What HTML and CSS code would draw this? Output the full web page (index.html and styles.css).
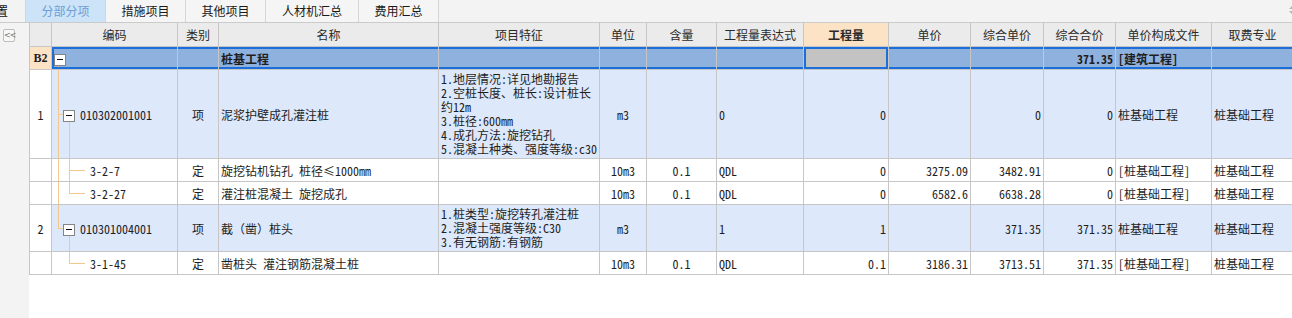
FILE: index.html
```html
<!DOCTYPE html>
<html lang="zh-CN">
<head>
  <meta charset="UTF-8">
  <title>分部分项</title>
  <link rel="stylesheet" href="styles.css">
</head>
<body>
  <div class="app">
    <!-- top tab strip -->
    <div class="tabbar">
      <div class="tab-cut"><span>置</span></div>
      <div class="tab active">分部分项</div>
      <div class="tab">措施项目</div>
      <div class="tab">其他项目</div>
      <div class="tab wide">人材机汇总</div>
      <div class="tab last">费用汇总</div>
      <div class="tab-fill"></div>
      <svg class="tab-scroll" width="8" height="10" viewBox="0 0 8 10">
        <path d="M4 0 L8 4 L0 4 Z M4 10 L8 6 L0 6 Z" fill="#b5b5b5"/>
      </svg>
    </div>

    <div class="workspace">
      <aside class="side">
        <button class="collapse">&lt;&lt;</button>
      </aside>

      <main class="grid-wrap">
        <table class="grid">
          <colgroup>
            <col style="width:22px">
            <col style="width:126px">
            <col style="width:41px">
            <col style="width:220px">
            <col style="width:161px">
            <col style="width:47px">
            <col style="width:70px">
            <col style="width:87px">
            <col style="width:85px">
            <col style="width:82px">
            <col style="width:73px">
            <col style="width:72px">
            <col style="width:96px">
            <col style="width:82px">
          </colgroup>
          <thead>
            <tr class="head">
              <th></th>
              <th>编码</th>
              <th>类别</th>
              <th>名称</th>
              <th>项目特征</th>
              <th>单位</th>
              <th>含量</th>
              <th>工程量表达式</th>
              <th class="hot">工程量</th>
              <th>单价</th>
              <th>综合单价</th>
              <th>综合合价</th>
              <th>单价构成文件</th>
              <th>取费专业</th>
            </tr>
          </thead>
          <tbody>
            <!-- section row (selected) -->
            <tr class="section">
              <td class="num hot"><b>B2</b></td>
              <td class="code tree-root sel-first"><span class="toggle"></span></td>
              <td></td>
              <td class="txt"><b>桩基工程</b></td>
              <td></td>
              <td></td>
              <td></td>
              <td></td>
              <td class="qty-cell"></td>
              <td></td>
              <td></td>
              <td class="r"><b>371.35</b></td>
              <td class="txt"><b>[建筑工程]</b></td>
              <td class="sel-last"></td>
            </tr>

            <tr class="item tall">
              <td class="num">1</td>
              <td class="code tree-item-open"><span class="toggle"></span>010302001001</td>
              <td class="c">项</td>
              <td class="txt">泥浆护壁成孔灌注桩</td>
              <td class="feat">1.地层情况:详见地勘报告<br>2.空桩长度、桩长:设计桩长<br>约12m<br>3.桩径:600mm<br>4.成孔方法:旋挖钻孔<br>5.混凝土种类、强度等级:c30</td>
              <td class="c">m3</td>
              <td class="c"></td>
              <td class="txt">0</td>
              <td class="r">0</td>
              <td class="r"></td>
              <td class="r">0</td>
              <td class="r">0</td>
              <td class="txt">桩基础工程</td>
              <td class="txt">桩基础工程</td>
            </tr>

            <tr class="sub">
              <td class="num"></td>
              <td class="code tree-child-mid">3-2-7</td>
              <td class="c">定</td>
              <td class="txt">旋挖钻机钻孔 桩径≤1000mm</td>
              <td></td>
              <td class="c">10m3</td>
              <td class="c">0.1</td>
              <td class="txt">QDL</td>
              <td class="r">0</td>
              <td class="r">3275.09</td>
              <td class="r">3482.91</td>
              <td class="r">0</td>
              <td class="txt">[桩基础工程]</td>
              <td class="txt">桩基础工程</td>
            </tr>

            <tr class="sub">
              <td class="num"></td>
              <td class="code tree-child-end">3-2-27</td>
              <td class="c">定</td>
              <td class="txt">灌注桩混凝土 旋挖成孔</td>
              <td></td>
              <td class="c">10m3</td>
              <td class="c">0.1</td>
              <td class="txt">QDL</td>
              <td class="r">0</td>
              <td class="r">6582.6</td>
              <td class="r">6638.28</td>
              <td class="r">0</td>
              <td class="txt">[桩基础工程]</td>
              <td class="txt">桩基础工程</td>
            </tr>

            <tr class="item mid">
              <td class="num">2</td>
              <td class="code tree-item-last"><span class="toggle"></span>010301004001</td>
              <td class="c">项</td>
              <td class="txt">截（凿）桩头</td>
              <td class="feat">1.桩类型:旋挖转孔灌注桩<br>2.混凝土强度等级:C30<br>3.有无钢筋:有钢筋</td>
              <td class="c">m3</td>
              <td class="c"></td>
              <td class="txt">1</td>
              <td class="r">1</td>
              <td class="r"></td>
              <td class="r">371.35</td>
              <td class="r">371.35</td>
              <td class="txt">桩基础工程</td>
              <td class="txt">桩基础工程</td>
            </tr>

            <tr class="sub">
              <td class="num"></td>
              <td class="code tree-leaf-end">3-1-45</td>
              <td class="c">定</td>
              <td class="txt">凿桩头 灌注钢筋混凝土桩</td>
              <td></td>
              <td class="c">10m3</td>
              <td class="c">0.1</td>
              <td class="txt">QDL</td>
              <td class="r">0.1</td>
              <td class="r">3186.31</td>
              <td class="r">3713.51</td>
              <td class="r">371.35</td>
              <td class="txt">[桩基础工程]</td>
              <td class="txt">桩基础工程</td>
            </tr>
          </tbody>
        </table>
      </main>
    </div>
  </div>
</body>
</html>
```

FILE: styles.css
```css
/* Global */
body {
  margin: 0;
  background: #ffffff;
  font-family: "Noto Sans Mono CJK SC", "Noto Sans CJK SC", sans-serif;
  font-size: 12px;
  color: #1e1e1e;
  overflow: hidden;
}

.app {
  display: flex;
  flex-direction: column;
  height: 318px;
}

/* Tab strip */
.tabbar {
  display: flex;
  height: 22px;
  background: #f3f3f3;
  border-bottom: 1px solid #cbcbcb;
  line-height: 22px;
}

.tab-cut {
  width: 25px;
  overflow: hidden;
  color: #111;
}

.tab-cut span {
  margin-left: -4px;
}

.tab {
  width: 79px;
  text-align: center;
  border-left: 1px solid #d5d5d5;
  background: #f5f5f5;
  color: #1a1a1a;
}

.tab.active {
  background: #cde3f7;
  color: #6a9fd6;
}

.tab.wide {
  width: 92px;
}

.tab.last {
  border-right: 1px solid #d5d5d5;
}

.tab-fill {
  flex: 1;
}

.tab-scroll {
  margin: 5px -5px 0 0;
}

/* Body */
.workspace {
  flex: 1;
  display: flex;
  min-height: 0;
}

.side {
  width: 29px;
  flex: none;
  background: #f3f3f3;
  padding: 6px 0 0 3px;
  box-sizing: border-box;
}

.collapse {
  display: block;
  width: 12px;
  height: 13px;
  padding: 0;
  border: 1px solid #bdbdbd;
  border-radius: 2px;
  background: #f8f8f8;
  color: #777;
  font-size: 8px;
  line-height: 11px;
  letter-spacing: -1px;
  font-family: "DejaVu Sans", sans-serif;
  text-align: center;
}

.grid-wrap {
  flex: 1;
  overflow: hidden;
}

/* Grid */
.grid {
  table-layout: fixed;
  border-collapse: collapse;
  width: 1264px;
}

.grid th,
.grid td {
  border: 1px solid #c6c6c6;
  padding: 0 2px;
  white-space: nowrap;
  overflow: hidden;
  vertical-align: middle;
}

.grid thead th {
  border-top: none;
}

.head th {
  height: 23px;
  background: #ebebeb;
  font-weight: normal;
  color: #2a2a2a;
  text-align: center;
}

.head th.hot {
  background: #fde3c6;
  font-weight: bold;
}

.grid td.c { text-align: center; }
.grid td.r { text-align: right; }
.grid td.txt { text-align: left; }
.grid td.num { text-align: center; background: #fff; padding: 0; }

.grid td.feat {
  line-height: 14px;
  padding-left: 2px;
}

/* Section row, selected */
.section td {
  height: 22px;
  background: #8fb1de;
  box-shadow: inset 0 2px #1c6fda, inset 0 -2px #1c6fda;
}

.section td.num.hot {
  background: #fde3c6;
  box-shadow: none;
  font-family: "Liberation Serif", serif;
}

.section td.sel-first {
  box-shadow: inset 2px 0 #1c6fda, inset 0 2px #1c6fda, inset 0 -2px #1c6fda;
}

.section td.qty-cell {
  background: #c3c3c3;
  box-shadow: inset 0 0 0 2px #1c6fda;
}

.item td { background: #dde8fb; }
.item td.num { background: #fff; }

.tall td { height: 88px; }
.mid td { height: 46px; }
.sub td { height: 22px; }

/* Tree column */
.toggle {
  display: inline-block;
  width: 10px;
  height: 10px;
  border: 1px solid #858585;
  background: #fff linear-gradient(#111, #111) center / 6px 1px no-repeat;
  vertical-align: -2px;
  margin-right: 5px;
}

.grid td.code {
  --tl: #f2c98d;
  background-repeat: no-repeat;
}

.grid td.tree-root {
  padding-left: 2px;
  background-image: linear-gradient(var(--tl), var(--tl));
  background-position: 6px 16px;
  background-size: 1px 100%;
}

.grid td.tree-item-open,
.grid td.tree-item-last {
  padding-left: 11px;
  background-image:
    linear-gradient(var(--tl), var(--tl)),
    linear-gradient(var(--tl), var(--tl)),
    linear-gradient(var(--tl), var(--tl));
  background-position: 6px 0, 6px 50%, 17px 100%;
  background-size: 1px 100%, 5px 1px, 1px 50%;
}

.grid td.tree-item-last {
  background-size: 1px 50%, 5px 1px, 1px 50%;
}

.grid td.tree-child-mid,
.grid td.tree-child-end,
.grid td.tree-leaf-end {
  padding-left: 38px;
  background-image:
    linear-gradient(var(--tl), var(--tl)),
    linear-gradient(var(--tl), var(--tl)),
    linear-gradient(var(--tl), var(--tl));
  background-position: 6px 0, 17px 0, 17px 50%;
  background-size: 1px 100%, 1px 100%, 16px 1px;
}

.grid td.tree-child-end {
  background-size: 1px 100%, 1px 50%, 16px 1px;
}

.grid td.tree-leaf-end {
  background-image:
    linear-gradient(var(--tl), var(--tl)),
    linear-gradient(var(--tl), var(--tl));
  background-position: 17px 0, 17px 50%;
  background-size: 1px 50%, 16px 1px;
}
```
